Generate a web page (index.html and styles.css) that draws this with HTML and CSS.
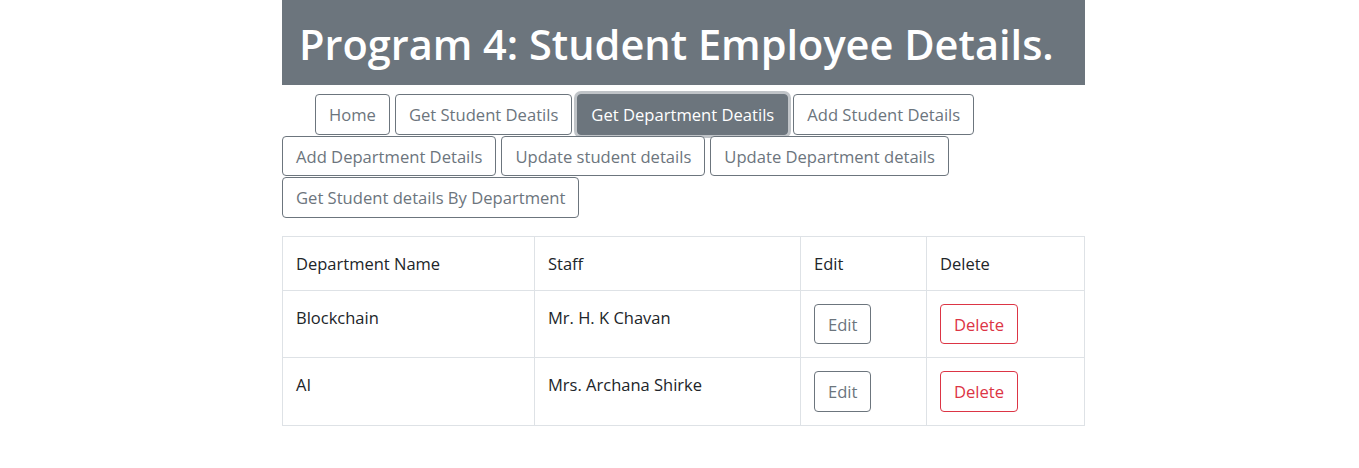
FILE: index.html
```html
<!DOCTYPE html>
<html>
<head>
<meta charset="utf-8">
<link rel="stylesheet" href="styles.css">
</head>
<body>
<div class="container">
  <h1 class="title">Program 4: Student Employee Details.</h1>
  <nav class="nav">
    <button class="btn btn-outline first">Home</button>
    <button class="btn btn-outline">Get Student Deatils</button>
    <button class="btn btn-active">Get Department Deatils</button>
    <button class="btn btn-outline">Add Student Details</button>
    <button class="btn btn-outline">Add Department Details</button>
    <button class="btn btn-outline">Update student details</button>
    <button class="btn btn-outline">Update Department details</button>
    <button class="btn btn-outline">Get Student details By Department</button>
  </nav>
  <table class="table">
    <thead>
      <tr><th class="c1">Department Name</th><th class="c2">Staff</th><th class="c3">Edit</th><th class="c4">Delete</th></tr>
    </thead>
    <tbody>
      <tr>
        <td>Blockchain</td><td>Mr. H. K Chavan</td>
        <td class="act"><button class="btn btn-outline">Edit</button></td>
        <td class="act"><button class="btn btn-danger">Delete</button></td>
      </tr>
      <tr>
        <td>AI</td><td>Mrs. Archana Shirke</td>
        <td class="act"><button class="btn btn-outline">Edit</button></td>
        <td class="act"><button class="btn btn-danger">Delete</button></td>
      </tr>
    </tbody>
  </table>
</div>
</body>
</html>
```

FILE: styles.css
```css
html, body {
  margin: 0;
  padding: 0;
  background: #fff;
}
body {
  padding-left: 8px;
  font-family: "Open Sans", "Noto Sans", sans-serif;
  font-size: 16.5px;
  color: #212529;
}
.container {
  width: 803px;
  margin: 0 auto;
}
.title {
  margin: 0;
  background: #6c757d;
  color: #fff;
  height: 85px;
  box-sizing: border-box;
  padding: 14px 17px 0;
  font-size: 41.5px;
  font-weight: 600;
  line-height: 60px;
  letter-spacing: 0;
}
.nav {
  display: flex;
  flex-wrap: wrap;
  column-gap: 5px;
  row-gap: 1px;
  padding-top: 9px;
}
.btn {
  font-family: inherit;
  font-size: 16.6px;
  line-height: 24.5px;
  padding: 8px 13px 6px;
  border-radius: 4px;
  background: #fff;
  border: 1px solid #6c757d;
  color: #6c757d;
  cursor: pointer;
}
.first { margin-left: 33px; }
.btn-active {
  background: #6c757d;
  color: #fff;
  box-shadow: 0 0 0 3px rgba(130, 138, 145, 0.5);
}
.btn-danger {
  border-color: #dc3545;
  color: #dc3545;
}
.table {
  width: 100%;
  margin-top: 18px;
  border-collapse: collapse;
  vertical-align: top;
}
.table th, .table td {
  border: 1px solid #dee2e6;
  padding: 14px 13px;
  text-align: left;
  font-weight: 400;
  line-height: 25px;
  vertical-align: top;
}
.table td.act { padding-top: 13px; padding-bottom: 13px; }
.c1 { width: 225px; }
.c2 { width: 239px; }
.c3 { width: 99px; }
```
